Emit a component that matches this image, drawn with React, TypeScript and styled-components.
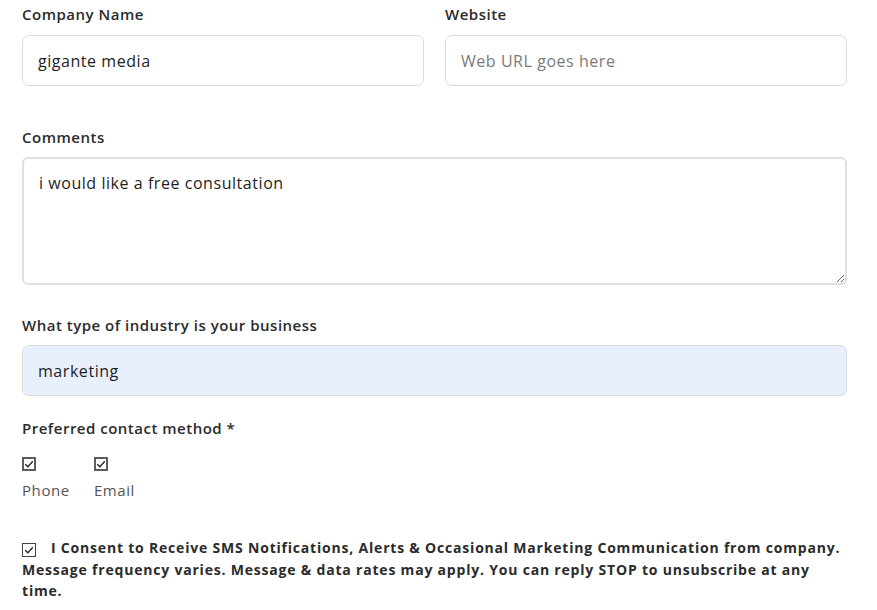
import React from 'react';
import styled, { createGlobalStyle } from 'styled-components';

const Global = createGlobalStyle`
	body {
		margin: 0;
		background: #fff;
		font-family: 'Open Sans', 'Liberation Sans', sans-serif;
		color: #222;
	}
`;

const Form = styled.form`
	display: flex;
	flex-direction: column;
	padding: 3px 30px 0 22px;
`;

const Row = styled.div`
	display: grid;
	grid-template-columns: 1fr 1fr;
	column-gap: 21px;
`;

const Field = styled.div<{ $gap?: number }>`
	display: flex;
	flex-direction: column;
	margin-bottom: ${(p) => p.$gap ?? 0}px;
`;

const Label = styled.label<{ $space?: number }>`
	font-size: 15px;
	font-weight: 600;
	letter-spacing: 0.5px;
	color: #2b2b2b;
	line-height: 22px;
	margin-bottom: ${(p) => p.$space ?? 9}px;
`;

const Input = styled.input<{ $filled?: boolean }>`
	box-sizing: border-box;
	height: 51px;
	width: 100%;
	padding: 0 15px;
	border: 1px solid #dcdcdc;
	border-radius: 7px;
	background: ${(p) => (p.$filled ? '#e8f0fe' : '#fff')};
	font-family: inherit;
	font-size: 16px;
	letter-spacing: 0.55px;
	color: #1e1e1e;
	outline: none;

	&::placeholder {
		color: #7a7a7a;
	}
`;

const TextArea = styled.textarea`
	box-sizing: border-box;
	height: 128px;
	width: 100%;
	padding: 13px 15px;
	border: 2px solid #e0e0e0;
	border-radius: 6px;
	font-family: inherit;
	font-size: 16px;
	letter-spacing: 0.55px;
	color: #1e1e1e;
	outline: none;
	resize: vertical;
`;

const Options = styled.div`
	display: flex;
	gap: 24px;
	margin-bottom: 37px;
`;

const Option = styled.label`
	display: flex;
	flex-direction: column;
	gap: 9px;
	font-size: 15px;
	letter-spacing: 0.6px;
	color: #555;
`;

const Box = styled.span<{ $thin?: boolean }>`
	display: inline-flex;
	align-items: center;
	justify-content: center;
	box-sizing: border-box;
	width: 14px;
	height: 14px;
	border: ${(p) => (p.$thin ? '1px solid #444' : '2px solid #5c5c5c')};
	flex: none;

	svg {
		width: 10px;
		height: 10px;
	}
`;

const Consent = styled.label`
	display: block;
	font-size: 14px;
	font-weight: 700;
	letter-spacing: 0.8px;
	line-height: 21.5px;
	color: #2b2b2b;

	${Box} {
		vertical-align: -2px;
		margin-right: 15px;
	}
`;

const Check = ({ thin }: { thin?: boolean }) => (
	<Box $thin={thin}>
		<svg viewBox="0 0 10 10" fill="none" stroke="#222" strokeWidth="1.3">
			<path d="M1.2 5.2 L3.9 7.8 L8.8 2.2" />
		</svg>
	</Box>
);

export default function App() {
	return (
		<>
			<Global />
			<Form onSubmit={(e) => e.preventDefault()}>
				<Row>
					<Field $gap={40}>
						<Label $space={10}>Company Name</Label>
						<Input defaultValue="gigante media" />
					</Field>
					<Field $gap={40}>
						<Label $space={10}>Website</Label>
						<Input placeholder="Web URL goes here" />
					</Field>
				</Row>
				<Field $gap={29}>
					<Label>Comments</Label>
					<TextArea defaultValue="i would like a free consultation" />
				</Field>
				<Field $gap={21}>
					<Label>What type of industry is your business</Label>
					<Input $filled defaultValue="marketing" />
				</Field>
				<Label $space={18}>Preferred contact method *</Label>
				<Options>
					<Option>
						<Check />
						Phone
					</Option>
					<Option>
						<Check />
						Email
					</Option>
				</Options>
				<Consent>
					<Check thin />
					I Consent to Receive SMS Notifications, Alerts &amp; Occasional Marketing Communication from company.
					Message frequency varies. Message &amp; data rates may apply. You can reply STOP to unsubscribe at any
					time.
				</Consent>
			</Form>
		</>
	);
}
